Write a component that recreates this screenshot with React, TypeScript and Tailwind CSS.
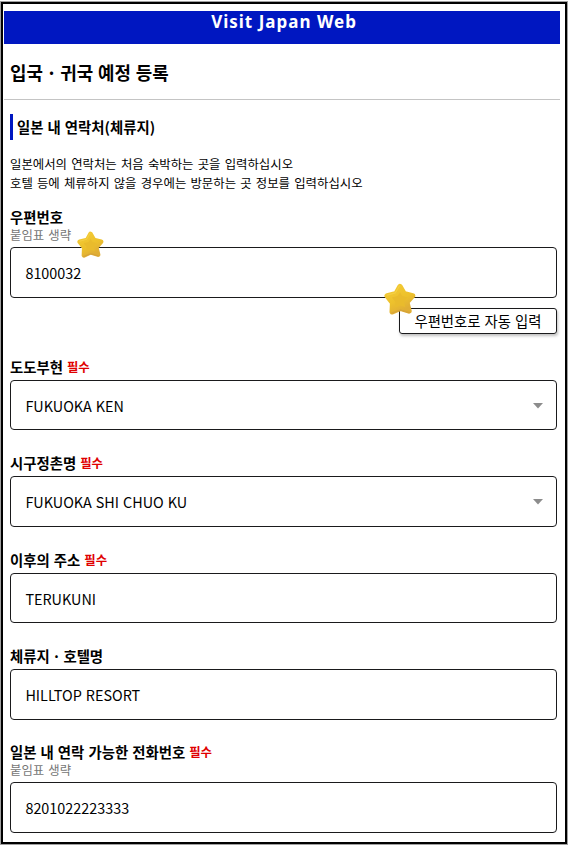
import { clsx } from "clsx";
import type { ReactNode } from "react";

interface FieldProps {
  label: ReactNode;
  value: string;
  required?: boolean;
  hint?: string;
  select?: boolean;
  star?: boolean;
  className?: string;
  boxClassName?: string;
}

const Dot = () => <span className="-mx-[1.5px]">·</span>;

const Star = ({ className }: { className?: string }) => (
  <svg viewBox="0 0 32 32" className={clsx("absolute", className)}>
    <defs>
      <linearGradient id="star-fill" x1="0" y1="0" x2="0.5" y2="1">
        <stop offset="0" stopColor="#f3ca35" />
        <stop offset="0.6" stopColor="#edc12c" />
        <stop offset="1" stopColor="#e0ae35" />
      </linearGradient>
    </defs>
    <path
      d="M16 3.5 L20 10.6 L28.6 12.8 L22.8 19.2 L25 28 L16.3 25.2 L8.2 28.8 L8.6 19.8 L3.2 12.8 L12 10.7 Z"
      fill="#e9bb2c"
      stroke="url(#star-fill)"
      strokeWidth="5.4"
      strokeLinejoin="round"
    />
    <path
      d="M3 12.2 L11.4 9.8 L15.4 3"
      fill="none"
      stroke="#f9da55"
      strokeWidth="1.2"
      strokeLinecap="round"
      strokeLinejoin="round"
      opacity="0.5"
    />
    <path
      d="M25.4 29.6 L16.3 27 L7.8 30.2"
      fill="none"
      stroke="#cf9b3c"
      strokeWidth="1.3"
      strokeLinecap="round"
      strokeLinejoin="round"
      opacity="0.6"
    />
  </svg>
);

const Field = ({
  label,
  value,
  required,
  hint,
  select,
  star,
  className,
  boxClassName = "h-[51px]",
}: FieldProps) => (
  <div className={clsx("relative", className)}>
    <div className="flex h-5 items-center gap-1 text-[14.4px] font-bold">
      <span>{label}</span>
      {required && <span className="text-[12.4px] text-[#e00000]">필수</span>}
    </div>
    {hint && (
      <p className="h-4 text-[12.4px] leading-4 text-[#767676] [word-spacing:1.4px]">
        {hint}
      </p>
    )}
    <div
      className={clsx(
        "flex items-center justify-between rounded-[4px] border border-[#1a1a1c] pl-[14.4px] pr-[13px] pt-px text-[14.4px]",
        hint ? "mt-1" : "mt-[3px]",
        boxClassName
      )}>
      <span>{value}</span>
      {select && (
        <svg viewBox="0 0 10 6" className="h-[6px] w-[10px]">
          <path d="M0 0H10L5 5.6Z" fill="#8c8c8c" />
        </svg>
      )}
    </div>
    {star && <Star className="left-[67px] top-[24px] h-[27px] w-[27px]" />}
  </div>
);

const App = () => {
  return (
    <div className="h-[845px] w-[568px] bg-white pl-px pt-[2px] font-['Noto_Sans_CJK_KR',sans-serif] text-black [word-spacing:0.8px]">
      <main className="h-[842px] w-[566px] border-2 border-black pl-px pr-[5px] pt-[7px] outline outline-[#a0a0a0]">
        <header className="h-[33px] bg-[#0017c1] pl-1 pt-px text-center font-['Noto_Sans',sans-serif] text-[17px] font-bold leading-5 tracking-[1px] text-white [word-spacing:0px]">
          Visit Japan Web
        </header>
        <h1 className="flex h-[56px] items-center border-b border-[#c4c4c4] pl-[6px] pt-[2px] text-[17.9px] font-bold">
          <span>
            입국 <Dot /> 귀국 예정 등록
          </span>
        </h1>
        <section className="pl-[6px] pr-[3px] pt-[14px]">
          <h2 className="flex h-[26px] items-center border-l-[3px] border-[#0017c1] pl-1 text-[14.4px] font-bold">
            일본 내 연락처(체류지)
          </h2>
          <p className="mt-[15px] text-[12.4px] leading-[19px] [word-spacing:1.4px]">
            일본에서의 연락처는 처음 숙박하는 곳을 입력하십시오
            <br />
            호텔 등에 체류하지 않을 경우에는 방문하는 곳 정보를 입력하십시오
          </p>
          <Field
            className="mt-[14px]"
            label="우편번호"
            hint="붙임표 생략"
            value="8100032"
            star
          />
          <div className="relative mt-[10px] flex justify-end">
            <button className="h-[26px] w-[158px] rounded-[3px] border border-[#1a1a1c] text-[14.4px] leading-6 shadow-[1px_2px_3px_rgba(0,0,0,0.25)] [word-spacing:0.8px]">
              우편번호로 자동 입력
            </button>
            <Star className="right-[141px] top-[-25px] h-8 w-8" />
          </div>
          <Field
            className="mt-[23px]"
            label="도도부현"
            value="FUKUOKA KEN"
            required
            select
            boxClassName="h-[50px]"
          />
          <Field
            className="mt-[23px]"
            label="시구정촌명"
            value="FUKUOKA SHI CHUO KU"
            required
            select
          />
          <Field
            className="mt-[23px]"
            label="이후의 주소"
            value="TERUKUNI"
            required
            boxClassName="h-[50px]"
          />
          <Field
            className="mt-[23px]"
            label={
              <>
                체류지 <Dot /> 호텔명
              </>
            }
            value="HILLTOP RESORT"
          />
          <Field
            className="mt-[22px]"
            label="일본 내 연락 가능한 전화번호"
            hint="붙임표 생략"
            value="8201022223333"
            required
          />
        </section>
      </main>
    </div>
  );
};

export default App;
